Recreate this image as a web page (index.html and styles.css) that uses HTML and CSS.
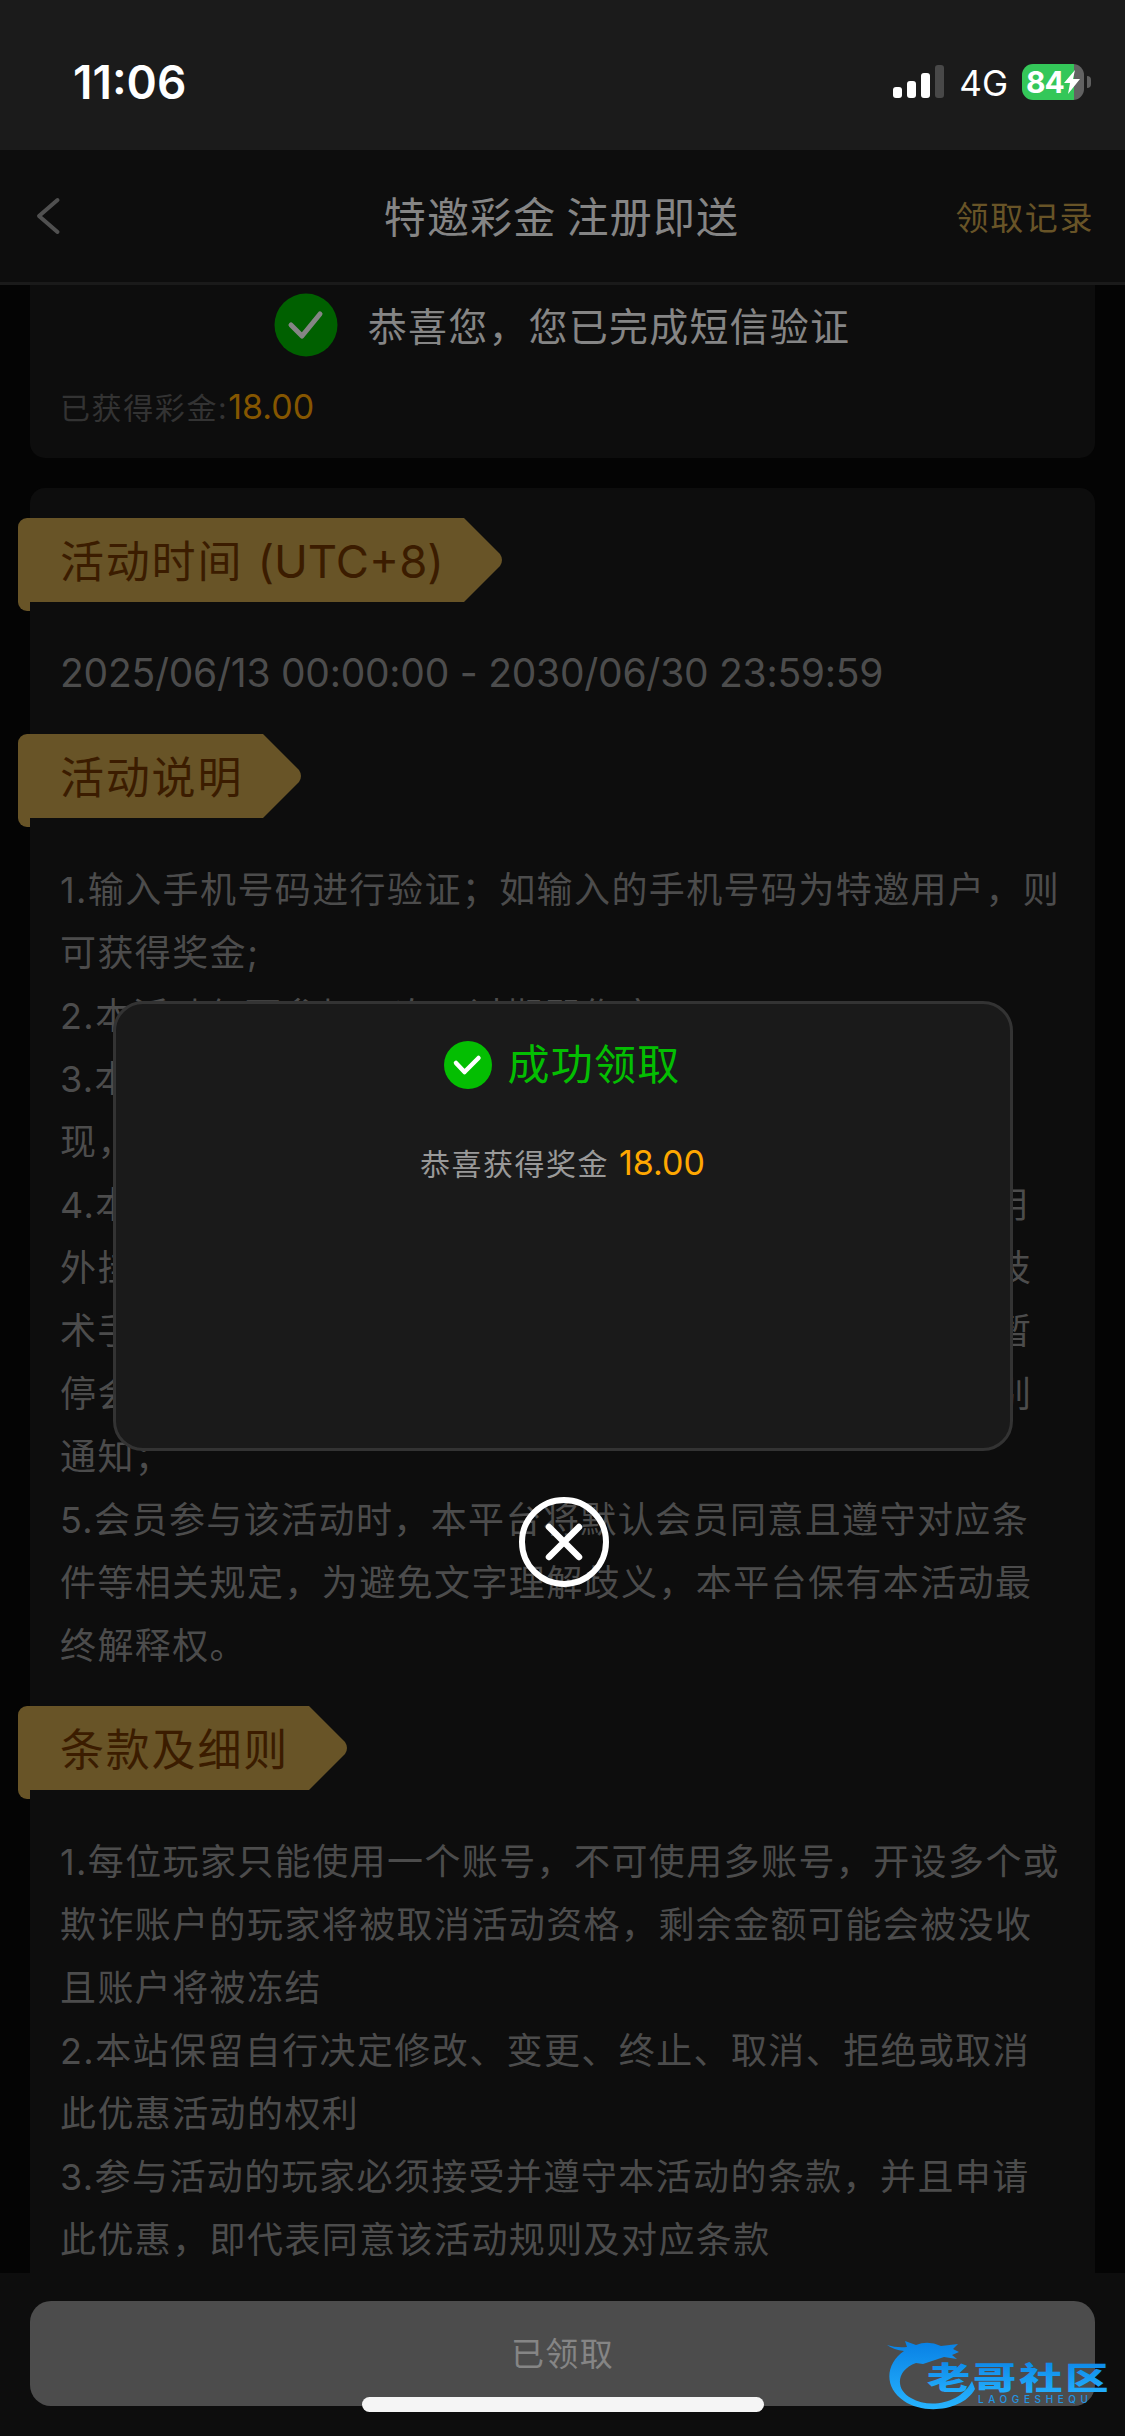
FILE: index.html
```html
<!DOCTYPE html>
<html lang="zh-CN">
<head>
<meta charset="utf-8">
<title>特邀彩金 注册即送</title>
<link rel="stylesheet" href="styles.css">
</head>
<body>
<div class="screen">
  <header class="status">
    <span class="clock">11:06</span>
    <div class="indicators">
      <svg class="signal" width="52" height="34" viewBox="0 0 52 34"><g fill="#fff"><rect x="0" y="22" width="9" height="11" rx="3"/><rect x="14" y="16" width="9" height="17" rx="3"/><rect x="28" y="8" width="9" height="25" rx="3"/></g><rect x="42" y="0" width="9" height="33" rx="3" fill="#484848"/></svg>
      <span class="network">4G</span>
      <div class="battery"><span class="level">84</span><svg class="bolt" width="16" height="24" viewBox="0 0 16 24"><path d="M11 0 0 13h6L4 24 16 9H9z" fill="#fff"/></svg></div>
      <span class="cap"></span>
    </div>
  </header>
  <nav class="navbar">
    <svg class="back" width="25" height="38" viewBox="0 0 25 38"><path d="M21.500 3 3 19l18.500 16" fill="none" stroke="#505050" stroke-width="4" stroke-linecap="round" stroke-linejoin="round"/></svg>
    <h1 class="title">特邀彩金 注册即送</h1>
    <a class="records">领取记录</a>
  </nav>
  <main class="content">
    <section class="card verified">
      <div class="verified-row">
        <svg width="64" height="64" viewBox="0 0 64 64"><circle cx="32" cy="32" r="31.5" fill="#006000"/><path d="M17 32l11 11L46 21" fill="none" stroke="#858585" stroke-width="5" stroke-linecap="round" stroke-linejoin="round"/></svg>
        <span class="verified-text">恭喜您，您已完成短信验证</span>
      </div>
      <p class="earned">已获得彩金:<span class="earned-value">18.00</span></p>
    </section>
    <section class="card rules">
      <h2 class="ribbon"><span class="ribbon-text">活动时间 <span class="utc">(UTC+8)</span></span><svg class="tip" width="40" height="84" viewBox="0 0 40 84"><path d="M0 0h1L37 36q4 6 0 12L1 84H0z" fill="#685427"/></svg></h2>
      <p class="text period">2025/06/13 00:00:00 - 2030/06/30 23:59:59</p>
      <h2 class="ribbon"><span class="ribbon-text">活动说明</span><svg class="tip" width="40" height="84" viewBox="0 0 40 84"><path d="M0 0h1L37 36q4 6 0 12L1 84H0z" fill="#685427"/></svg></h2>
      <div class="text details">
        <p>1.输入手机号码进行验证；如输入的手机号码为特邀用户，则<br>可获得奖金;</p>
        <p>2.本活动仅可参加一次，过期即作废;</p>
        <p>3.本活动所获得的奖金需完成指定流水要求后方可提<br>现，</p>
        <p>4.本活动仅限账号本人进行正常操作，禁止会员租借、使用<br>外挂、机器人、不同账号对赌、互刷、套利、利用接口、技<br>术手段等方式参与，一经查实本平台有权立即终止登录、暂<br>停会员使用本网站及没收奖金和不当盈利的权利，无需特别<br>通知；</p>
        <p>5.会员参与该活动时，本平台将默认会员同意且遵守对应条<br>件等相关规定，为避免文字理解歧义，本平台保有本活动最<br>终解释权。</p>
      </div>
      <h2 class="ribbon"><span class="ribbon-text">条款及细则</span><svg class="tip" width="40" height="84" viewBox="0 0 40 84"><path d="M0 0h1L37 36q4 6 0 12L1 84H0z" fill="#685427"/></svg></h2>
      <div class="text terms">
        <p>1.每位玩家只能使用一个账号，不可使用多账号，开设多个或<br>欺诈账户的玩家将被取消活动资格，剩余金额可能会被没收<br>且账户将被冻结</p>
        <p>2.本站保留自行决定修改、变更、终止、取消、拒绝或取消<br>此优惠活动的权利</p>
        <p>3.参与活动的玩家必须接受并遵守本活动的条款，并且申请<br>此优惠，即代表同意该活动规则及对应条款</p>
      </div>
    </section>
  </main>
  <footer class="footer"><button class="claimed">已领取</button></footer>
  <div class="overlay">
    <div class="modal">
      <div class="modal-title"><svg width="48" height="48" viewBox="0 0 48 48"><circle cx="24" cy="24" r="24" fill="#04be02"/><path d="M12 22l8.500 9L34.500 17" fill="none" stroke="#fff" stroke-width="4.500" stroke-linecap="round" stroke-linejoin="round"/></svg><span class="modal-heading">成功领取</span></div>
      <p class="prize">恭喜获得奖金 <span class="prize-value">18.00</span></p>
    </div>
    <svg class="close" width="90" height="90" viewBox="0 0 90 90"><circle cx="45" cy="45" r="42" fill="none" stroke="#fff" stroke-width="6"/><path d="M30 30l30 30M60 30L30 60" stroke="#fff" stroke-width="6.500" stroke-linecap="round"/></svg>
  </div>
  <svg class="watermark" width="230" height="86" viewBox="0 0 230 86">
    <defs><linearGradient id="blue" x1="0" y1="0" x2="0" y2="1"><stop offset="0" stop-color="#0880e4"/><stop offset="1" stop-color="#27b4ff"/></linearGradient></defs>
    <path d="M0 9q9 3 20 2l-2-6 11 4q12-5 25 1l17-2-5 5 6 3-7 3 5 4-13-2-9 3-12 4-7-1C9 34 8 54 24 62c20 12 51 4 61-17l3 8C76 75 37 79 17 65-4 51-1 27 17 15Q7 14 0 9z" fill="url(#blue)"/>
    <text class="mark-name" transform="translate(40 53) scale(1.08 .76)" x="0" y="0" textLength="168" lengthAdjust="spacing" fill="url(#blue)">老哥社区</text>
    <text class="mark-latin" x="91" y="67" textLength="110" fill="#2196e6">LAOGESHEQU</text>
  </svg>
  <div class="home-bar"></div>
</div>
</body>
</html>
```
FILE: styles.css
```css
* { box-sizing: border-box; margin: 0; padding: 0; }
body { width: 1125px; height: 2436px; overflow: hidden; background: #040404; font-family: Inter, "Noto Sans CJK SC", sans-serif; color: #4c4c4c; }
.screen { position: relative; height: 2436px; display: flex; flex-direction: column; overflow: hidden; }
.status { flex: none; height: 150px; background: #1b1b1b; color: #fff; display: flex; justify-content: space-between; padding: 0 34px 0 73px; }
.clock { font-size: 46px; line-height: 54px; font-weight: 600; padding-top: 55px; }
.indicators { display: flex; align-items: center; height: 36px; margin-top: 64px; }
.network { font-size: 35px; line-height: 36px; margin: 1px 14px 0 14px; }
.battery { width: 62px; height: 36px; border-radius: 11px; display: flex; align-items: center; padding-left: 4px; background: linear-gradient(90deg, #34c759 52px, #626262 52px); }
.level { font-size: 30px; font-weight: 700; letter-spacing: -1px; line-height: 36px; }
.cap { width: 4px; height: 12px; border-radius: 0 6px 6px 0; margin-left: 3px; background: #5f5f5f; }
.navbar { flex: none; height: 135px; background: #0d0d0d; border-bottom: 3px solid #1a1a1a; display: grid; grid-template-columns: 1fr auto 1fr; align-items: center; padding: 0 31px; }
.back { margin-left: 5px; }
.title { font-size: 42px; letter-spacing: 1.2px; word-spacing: -3px; font-weight: 400; color: #858585; line-height: 60px; padding: 3px 2px 0 0; }
.records { justify-self: end; font-size: 33px; letter-spacing: 1.6px; color: #685427; }
.content { height: 1988px; flex: none; overflow: hidden; padding: 0 30px; display: flex; flex-direction: column; gap: 30px; }
.card { background: #0d0d0d; flex: none; }
.verified { height: 173px; padding: 8px 30px 0; border-radius: 0 0 15px 15px; }
.verified-row { display: flex; align-items: center; justify-content: center; height: 64px; gap: 30px; padding-right: 1px; }
.verified-text { font-size: 39px; letter-spacing: 1.2px; color: #858585; padding-bottom: 3px; }
.earned { margin-top: 26px; font-size: 30px; line-height: 48px; letter-spacing: 1.6px; color: #333; }
.earned-value { font-size: 34px; letter-spacing: 0; color: #855600; }
.rules { padding: 30px 30px 0; border-radius: 15px 15px 0 0; height: 1900px; }
.ribbon { position: relative; width: max-content; height: 84px; margin-left: -42px; background: #685427; border-radius: 9px 0 0 0; color: #3b1c00; font-size: 44px; line-height: 89px; font-weight: 400; padding: 0 19px 0 42px; }
.ribbon::after { content: ""; position: absolute; left: 0; top: 75px; width: 12px; height: 18px; background: #685427; border-radius: 0 0 0 9px; }
.ribbon-text { letter-spacing: 1.8px; }
.utc { font-size: 45.5px; letter-spacing: 0; line-height: 1; }
.tip { position: absolute; left: 100%; top: 0; }
.text { font-size: 36px; line-height: 63px; letter-spacing: 1.4px; color: #4c4c4c; white-space: nowrap; }
.period { margin: 39px 0 30px; font-size: 39px; letter-spacing: -.25px; }
.details { margin: 41px 0 28px; }
.terms { margin-top: 41px; }
.footer { flex: none; height: 163px; background: #0d0d0d; padding: 28px 30px 0; }
.claimed { width: 100%; height: 105px; border: 0; border-radius: 21px; background: #4c4c4c; color: #858585; font: inherit; font-size: 33px; letter-spacing: 1.4px; padding-bottom: 3px; }
.overlay { position: absolute; inset: 1001px 0 auto; display: flex; flex-direction: column; align-items: center; gap: 46px; }
.modal { width: 900px; height: 450px; background: #1a1a1a; border: 3px solid #333; border-radius: 30px; display: flex; flex-direction: column; align-items: center; padding-top: 31px; }
.modal-title { display: flex; align-items: center; gap: 15px; height: 60px; font-size: 42px; letter-spacing: 1.3px; color: #04be02; }
.modal-heading { padding-bottom: 7px; }
.prize { margin-top: 44px; font-size: 30px; line-height: 48px; letter-spacing: 1.5px; color: #999; }
.prize-value { font-size: 34px; letter-spacing: 0; color: #ffa800; }
.close { margin-left: 3px; }
.watermark { position: absolute; left: 887px; top: 2336px; }
.mark-name { font: 900 40px "Noto Sans CJK SC", sans-serif; }
.mark-latin { font: 500 10px Inter, sans-serif; }
.home-bar { position: absolute; left: 362px; top: 2397px; width: 402px; height: 15px; border-radius: 8px; background: #f5f5f5; }
```
